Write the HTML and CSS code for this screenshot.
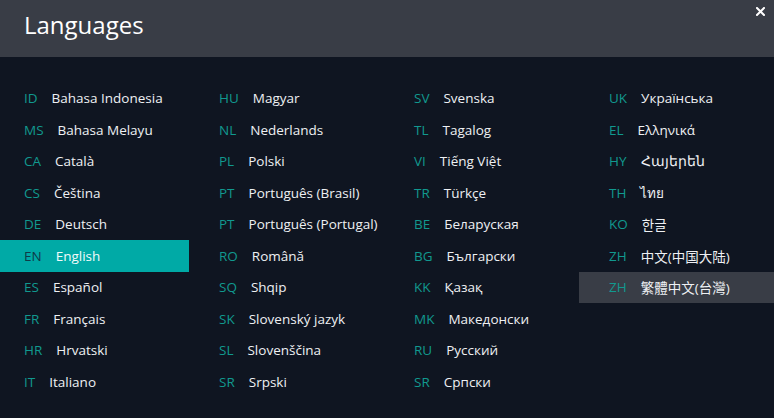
FILE: index.html
```html
<!DOCTYPE html>
<html lang="en">
<head>
<meta charset="utf-8">
<title>Languages</title>
<link rel="stylesheet" href="styles.css">
</head>
<body>
<div class="dialog">
  <header class="header">
    <h1 class="title">Languages</h1>
    <button class="close" aria-label="Close">
      <svg width="9" height="9" viewBox="0 0 9 9"><path d="M1 1L8 8M8 1L1 8" stroke="#ffffff" stroke-width="2" stroke-linecap="square"/></svg>
    </button>
  </header>
  <div class="grid">
    <div class="col">
      <div class="item"><span class="code">ID</span><span class="name">Bahasa Indonesia</span></div>
      <div class="item"><span class="code">MS</span><span class="name">Bahasa Melayu</span></div>
      <div class="item"><span class="code">CA</span><span class="name">Català</span></div>
      <div class="item"><span class="code">CS</span><span class="name">Čeština</span></div>
      <div class="item"><span class="code">DE</span><span class="name">Deutsch</span></div>
      <div class="item active"><span class="code">EN</span><span class="name">English</span></div>
      <div class="item"><span class="code">ES</span><span class="name">Español</span></div>
      <div class="item"><span class="code">FR</span><span class="name">Français</span></div>
      <div class="item"><span class="code">HR</span><span class="name">Hrvatski</span></div>
      <div class="item"><span class="code">IT</span><span class="name">Italiano</span></div>
    </div>
    <div class="col">
      <div class="item"><span class="code">HU</span><span class="name">Magyar</span></div>
      <div class="item"><span class="code">NL</span><span class="name">Nederlands</span></div>
      <div class="item"><span class="code">PL</span><span class="name">Polski</span></div>
      <div class="item"><span class="code">PT</span><span class="name">Português (Brasil)</span></div>
      <div class="item"><span class="code">PT</span><span class="name">Português (Portugal)</span></div>
      <div class="item"><span class="code">RO</span><span class="name">Română</span></div>
      <div class="item"><span class="code">SQ</span><span class="name">Shqip</span></div>
      <div class="item"><span class="code">SK</span><span class="name">Slovenský jazyk</span></div>
      <div class="item"><span class="code">SL</span><span class="name">Slovenščina</span></div>
      <div class="item"><span class="code">SR</span><span class="name">Srpski</span></div>
    </div>
    <div class="col">
      <div class="item"><span class="code">SV</span><span class="name">Svenska</span></div>
      <div class="item"><span class="code">TL</span><span class="name">Tagalog</span></div>
      <div class="item"><span class="code">VI</span><span class="name">Tiếng Việt</span></div>
      <div class="item"><span class="code">TR</span><span class="name">Türkçe</span></div>
      <div class="item"><span class="code">BE</span><span class="name">Беларуская</span></div>
      <div class="item"><span class="code">BG</span><span class="name">Български</span></div>
      <div class="item"><span class="code">KK</span><span class="name">Қазақ</span></div>
      <div class="item"><span class="code">MK</span><span class="name">Македонски</span></div>
      <div class="item"><span class="code">RU</span><span class="name">Русский</span></div>
      <div class="item"><span class="code">SR</span><span class="name">Српски</span></div>
    </div>
    <div class="col">
      <div class="item"><span class="code">UK</span><span class="name">Українська</span></div>
      <div class="item"><span class="code">EL</span><span class="name">Ελληνικά</span></div>
      <div class="item"><span class="code">HY</span><span class="name">Հայերեն</span></div>
      <div class="item"><span class="code">TH</span><span class="name">ไทย</span></div>
      <div class="item"><span class="code">KO</span><span class="name">한글</span></div>
      <div class="item"><span class="code">ZH</span><span class="name">中文(中国大陆)</span></div>
      <div class="item hover"><span class="code">ZH</span><span class="name">繁體中文(台灣)</span></div>
    </div>
  </div>
</div>
</body>
</html>
```

FILE: styles.css
```css
html, body {
  margin: 0;
  padding: 0;
  background: #0f1521;
}
body {
  width: 774px;
  height: 418px;
  overflow: hidden;
  font-family: "Open Sans", "Noto Sans", "Noto Sans CJK TC", "Noto Sans CJK SC", sans-serif;
}
.dialog {
  display: flex;
  flex-direction: column;
}
.header {
  height: 57px;
  background: #393d46;
  display: flex;
  align-items: center;
  justify-content: space-between;
  position: relative;
}
.title {
  margin: 0 0 0 24px;
  font-weight: 400;
  font-size: 24px;
  color: #ffffff;
  line-height: 1;
  padding-bottom: 8px;
}
.close {
  position: absolute;
  top: 6px;
  right: 8px;
  background: none;
  border: 0;
  padding: 0;
  width: 11px;
  height: 11px;
  display: flex;
  align-items: center;
  justify-content: center;
}
.grid {
  display: grid;
  grid-template-columns: repeat(4, 195px);
  margin-left: -6px;
  padding-top: 25.5px;
}
.col {
  display: flex;
  flex-direction: column;
}
.item {
  height: 31.5px;
  display: flex;
  align-items: center;
  padding-left: 30px;
  font-size: 13.5px;
  white-space: nowrap;
}
.code {
  color: #11998f;
  margin-right: 14px;
}
.name {
  color: #eef0f3;
}
.item.active {
  background: #00aaa6;
}
.item.active .code {
  color: #0f3a48;
}
.item.active .name {
  color: #f2fbfb;
}
.item.hover {
  background: #393d46;
}
```
